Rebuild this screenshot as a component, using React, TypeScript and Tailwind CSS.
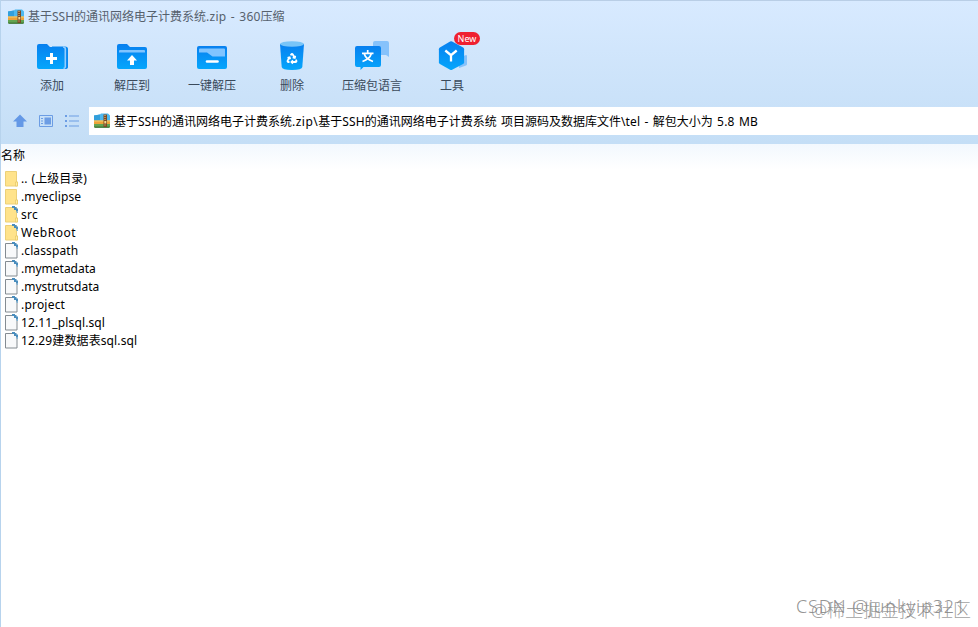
import React from "react";

type Entry = { name: string; kind: "folder" | "linkedFolder" | "file"; spacing?: string };

const entries: Entry[] = [
  { name: ".. (上级目录)", kind: "folder", spacing: "[word-spacing:1px]" },
  { name: ".myeclipse", kind: "folder", spacing: "tracking-[0.1px]" },
  { name: "src", kind: "linkedFolder", spacing: "tracking-[0.3px]" },
  { name: "WebRoot", kind: "linkedFolder", spacing: "tracking-[0.55px]" },
  { name: ".classpath", kind: "file", spacing: "tracking-[0.1px]" },
  { name: ".mymetadata", kind: "file" },
  { name: ".mystrutsdata", kind: "file" },
  { name: ".project", kind: "file", spacing: "tracking-[0.2px]" },
  { name: "12.11_plsql.sql", kind: "file", spacing: "tracking-[0.13px]" },
  { name: "12.29建数据表sql.sql", kind: "file", spacing: "tracking-[0.12px]" },
];

function ArchiveIcon() {
  return (
    <svg width="16" height="16" viewBox="0 0 16 16" className="shrink-0">
      <path d="M0 2.500l6-1 1-1h7l2 2v6H0z" fill="#4db8ee" />
      <path d="M0 2.500l6-1V8H0z" fill="#329fdb" />
      <path d="M0 7.500h16V11H0z" fill="#eda338" />
      <path d="M0 7.500h16v1H0z" fill="#f8cd69" />
      <path d="M0 11h16v3l-1 .7H1L0 14z" fill="#62a451" />
      <path d="M0 13.500h16v.5l-1 .7H1L0 14z" fill="#41743a" />
      <path d="M9.500 1.500h3.500V14H9.500z" fill="#7b4b25" />
      <path d="M10 2.500h2M10 4.500h2M10 6.500h2M10 12h2" stroke="#d0a56a" strokeWidth=".7" />
      <path d="M10.300 8h2v2.500h-2z" fill="#f5d88b" />
    </svg>
  );
}

function Gradient({ id }: { id: string }) {
  return (
    <defs>
      <linearGradient id={id} x1="0" y1="0" x2="0" y2="1">
        <stop offset="0" stopColor="#0880ef" />
        <stop offset="1" stopColor="#05a6fc" />
      </linearGradient>
    </defs>
  );
}

function AddIcon() {
  return (
    <svg width="40" height="34" viewBox="0 0 40 34">
      <Gradient id="add" />
      <path d="M20 6.500h13q3 0 3 2.500v18q0 2-3 2H20z" fill="#0788f1" />
      <path d="M5 6q0-2 2-2h8l3 3h13q2 0 2 2v18q0 2-2 2H7q-2 0-2-2z" fill="url(#add)" />
      <path d="M31 7q2.300 0 2.300 2v18q0 1-1.800 1.500" fill="none" stroke="#94ceff" strokeWidth="1.600" />
      <path d="M14 18.500h11M19.500 13v11" stroke="#fff" strokeWidth="3" />
    </svg>
  );
}

function ExtractIcon() {
  return (
    <svg width="40" height="34" viewBox="0 0 40 34">
      <Gradient id="extract" />
      <path d="M5 6q0-2 2-2h8l3 3h15q2 0 2 2v18q0 2-2 2H7q-2 0-2-2z" fill="url(#extract)" />
      <path d="M7 12.500V11q0-1 1-1h24q1 0 1 1v1.500z" fill="#80c4ff" />
      <path d="M20 15l5 5.500h-3V25h-4v-4.500h-3z" fill="#fff" />
    </svg>
  );
}

function QuickExtractIcon() {
  return (
    <svg width="40" height="34" viewBox="0 0 40 34">
      <Gradient id="quick" />
      <rect x="5" y="6" width="30" height="23" rx="2" fill="url(#quick)" />
      <path d="M7 9.500q0-1 1-1h24q1 0 1 1v7H20.500l-5.500-4H7z" fill="#80c4ff" />
      <path d="M15 21.500h10.500" stroke="#fff" strokeWidth="2.600" strokeLinecap="round" />
    </svg>
  );
}

function DeleteIcon() {
  return (
    <svg width="40" height="34" viewBox="0 0 40 34">
      <Gradient id="delete" />
      <path d="M8 4h24l-1.700 23q-.3 3-10.300 3T9.700 27z" fill="url(#delete)" />
      <ellipse cx="20" cy="4" rx="12" ry="2.800" fill="#79c5f8" />
      <g transform="translate(14 12.500) scale(.5)" fill="none" stroke="#fff" strokeWidth="3.600">
        <path d="M7 19H4.800a1.830 1.830 0 0 1-1.570-.880 1.790 1.790 0 0 1 0-1.780L7.200 9.500" />
        <path d="M11 19h8.200a1.830 1.830 0 0 0 1.560-.890 1.780 1.780 0 0 0 0-1.780l-1.220-2.100" />
        <path d="m14 16-3 3 3 3M8.300 13.600 7.200 9.500 3.100 10.600" />
        <path d="m9.340 5.810 1.100-1.890A1.830 1.830 0 0 1 12 3a1.780 1.780 0 0 1 1.550.890l3.940 6.840" />
        <path d="m13.400 9.630 4.100 1.100 1.100-4.100" />
      </g>
    </svg>
  );
}

function LanguageIcon() {
  return (
    <svg width="40" height="34" viewBox="0 0 40 34">
      <Gradient id="language" />
      <path d="M21 3q0-2 2-2h12q2 0 2 2v14l-3-2H21z" fill="#86c2fb" />
      <path d="M5 6h22q2 0 2 2v17q0 2-2 2H11.500l-3 3v-3H5q-2 0-2-2V8q0-2 2-2z" fill="url(#language)" />
      <path d="M15.700 10v2.500M10 13.300h11.500M12.300 14q1.500 5 8.700 7.500M19.200 14q-1.500 5-8.700 7.500" fill="none" stroke="#fff" strokeWidth="1.700" />
    </svg>
  );
}

function ToolsIcon() {
  return (
    <svg width="40" height="34" viewBox="0 0 40 34">
      <Gradient id="tools" />
      <path d="M27 18l7-3q1 0 1 1v8q0 1-1 1.500L27 28z" fill="#87c2fa" />
      <path d="M18.100 1.500q1-.5 2 0l11 6q1 .6 1 1.700v13q0 1.200-1 1.800l-11 5.700q-1 .5-2 0L7.900 24q-1-.6-1-1.800v-13q0-1.100 1-1.700z" fill="url(#tools)" />
      <path d="M13.300 10.500l5.700 4.700 5.700-4.700M19 15v6.500" fill="none" stroke="#fff" strokeWidth="2.300" />
    </svg>
  );
}

const tools = [
  { label: "添加", icon: <AddIcon /> },
  { label: "解压到", icon: <ExtractIcon /> },
  { label: "一键解压", icon: <QuickExtractIcon /> },
  { label: "删除", icon: <DeleteIcon /> },
  { label: "压缩包语言", icon: <LanguageIcon /> },
  { label: "工具", icon: <ToolsIcon />, badge: "New" },
];

function EntryIcon({ kind }: { kind: Entry["kind"] }) {
  const linked = kind !== "folder";
  return (
    <svg width="16" height="18" viewBox="0 0 16 18" className="shrink-0">
      {kind === "file" ? (
        <path d="M.5 1.500h8.500l3 3v11.500H.5z" fill="#f8f9fa" stroke="#848b91" />
      ) : (
        <>
          <path d="M.5 1.500h11v10.500h1v4H.5z" fill="#ffe38b" stroke="#ecd078" />
          <path d="M10.500 12v4h2v-4z" fill="#ffeda6" stroke="#e6c764" strokeWidth=".7" />
        </>
      )}
      {linked && (
        <>
          <path d="M7 0h3v1h1.500v1.500H13v3h-2V4H9V2H7z" fill="#4a8dbd" />
          <path d="M11.500 5.500H13V7h-1.500z" fill="#7fb2d4" />
        </>
      )}
    </svg>
  );
}

export default function App() {
  return (
    <div className="relative flex h-[627px] w-[978px] flex-col overflow-hidden border-l border-[#b7d3ed] bg-white font-['Noto_Sans','Noto_Sans_CJK_SC',sans-serif] text-[12px] text-black">
      <header className="flex h-[144px] shrink-0 flex-col border-t border-[#b9cee6] bg-linear-to-b from-[#d8eaff] to-[#c4def6]">
        <div className="flex h-[31px] items-center gap-1 pl-[7px] text-[#56616d]">
          <ArchiveIcon />
          <span className="whitespace-nowrap">
            基于SSH的通讯网络电子计费系统<span className="tracking-[0.25px] [word-spacing:1px]">.zip - 360</span>压缩
          </span>
        </div>
        <nav className="flex h-[75px] pl-[11px]">
          {tools.map((tool) => (
            <div key={tool.label} className="relative flex w-20 flex-col items-center pt-[8px] text-[#3a4a5b]">
              {tool.icon}
              <span className="mt-[3px] leading-[18px]">{tool.label}</span>
              {tool.badge && (
                <span className="absolute left-[42px] top-0 flex h-[13px] w-[26px] items-center justify-center rounded-full bg-[#ef2030] text-[9px] text-white">
                  {tool.badge}
                </span>
              )}
            </div>
          ))}
        </nav>
        <div className="flex h-[28px] items-center">
          <div className="flex w-[88px] items-center gap-[12px] pl-[12px]">
            <svg width="14" height="14" viewBox="0 0 14 14" fill="#6498e6">
              <path d="M7 .5l7 7h-3.500V13h-7V7.500H0z" />
            </svg>
            <svg width="14" height="12" viewBox="0 0 14 12" fill="none" stroke="#6c9de4">
              <path d="M.5.500h13v11H.5z" />
              <path d="M5.500 2.500H12v7H5.500z" fill="#6c9de4" stroke="none" />
              <path d="M2 3.500h2M2 6h2M2 8.500h2" />
            </svg>
            <svg width="14" height="12" viewBox="0 0 14 12" fill="#6c9de4">
              <path d="M0 0h2v2H0zM4 .5h10v1H4zM0 5h2v2H0zM4 5.500h10v1H4zM0 10h2v2H0zM4 10.500h10v1H4z" />
            </svg>
          </div>
          <div className="flex h-[28px] flex-1 items-center gap-1 bg-white pl-[5px]">
            <ArchiveIcon />
            <span className="whitespace-nowrap pt-[2px] [word-spacing:1px]">
              基于SSH的通讯网络电子计费系统<span className="tracking-[0.45px]">.zip\</span>基于<span className="tracking-[0.2px]">SSH</span>的通讯网络电子计费系统 项目源码及数据库文件<span className="tracking-[0.15px]">\tel - </span>解包大小为<span className="tracking-[0.2px]"> 5.8 MB</span>
            </span>
          </div>
        </div>
      </header>
      <main className="flex flex-1 flex-col">
        <div className="flex h-[26px] shrink-0 items-center bg-linear-to-b from-[#f2f8fe] to-white pb-[3px]">名称</div>
        <ul className="flex flex-col">
          {entries.map((entry) => (
            <li key={entry.name} className="flex h-[18px] items-center whitespace-nowrap pl-1 leading-[18px]">
              <EntryIcon kind={entry.kind} />
              <span className={entry.spacing}>{entry.name}</span>
            </li>
          ))}
        </ul>
      </main>
      <span className="absolute left-[795px] top-[594px] whitespace-nowrap text-[18px] font-light leading-6 tracking-[0.85px] text-[#777777]/80">CSDN @junkyip321</span>
      <span className="absolute left-[810px] top-[598px] whitespace-nowrap text-[18px] font-light leading-6 text-[#888888]/80">@稀土掘金技术社区</span>
    </div>
  );
}
